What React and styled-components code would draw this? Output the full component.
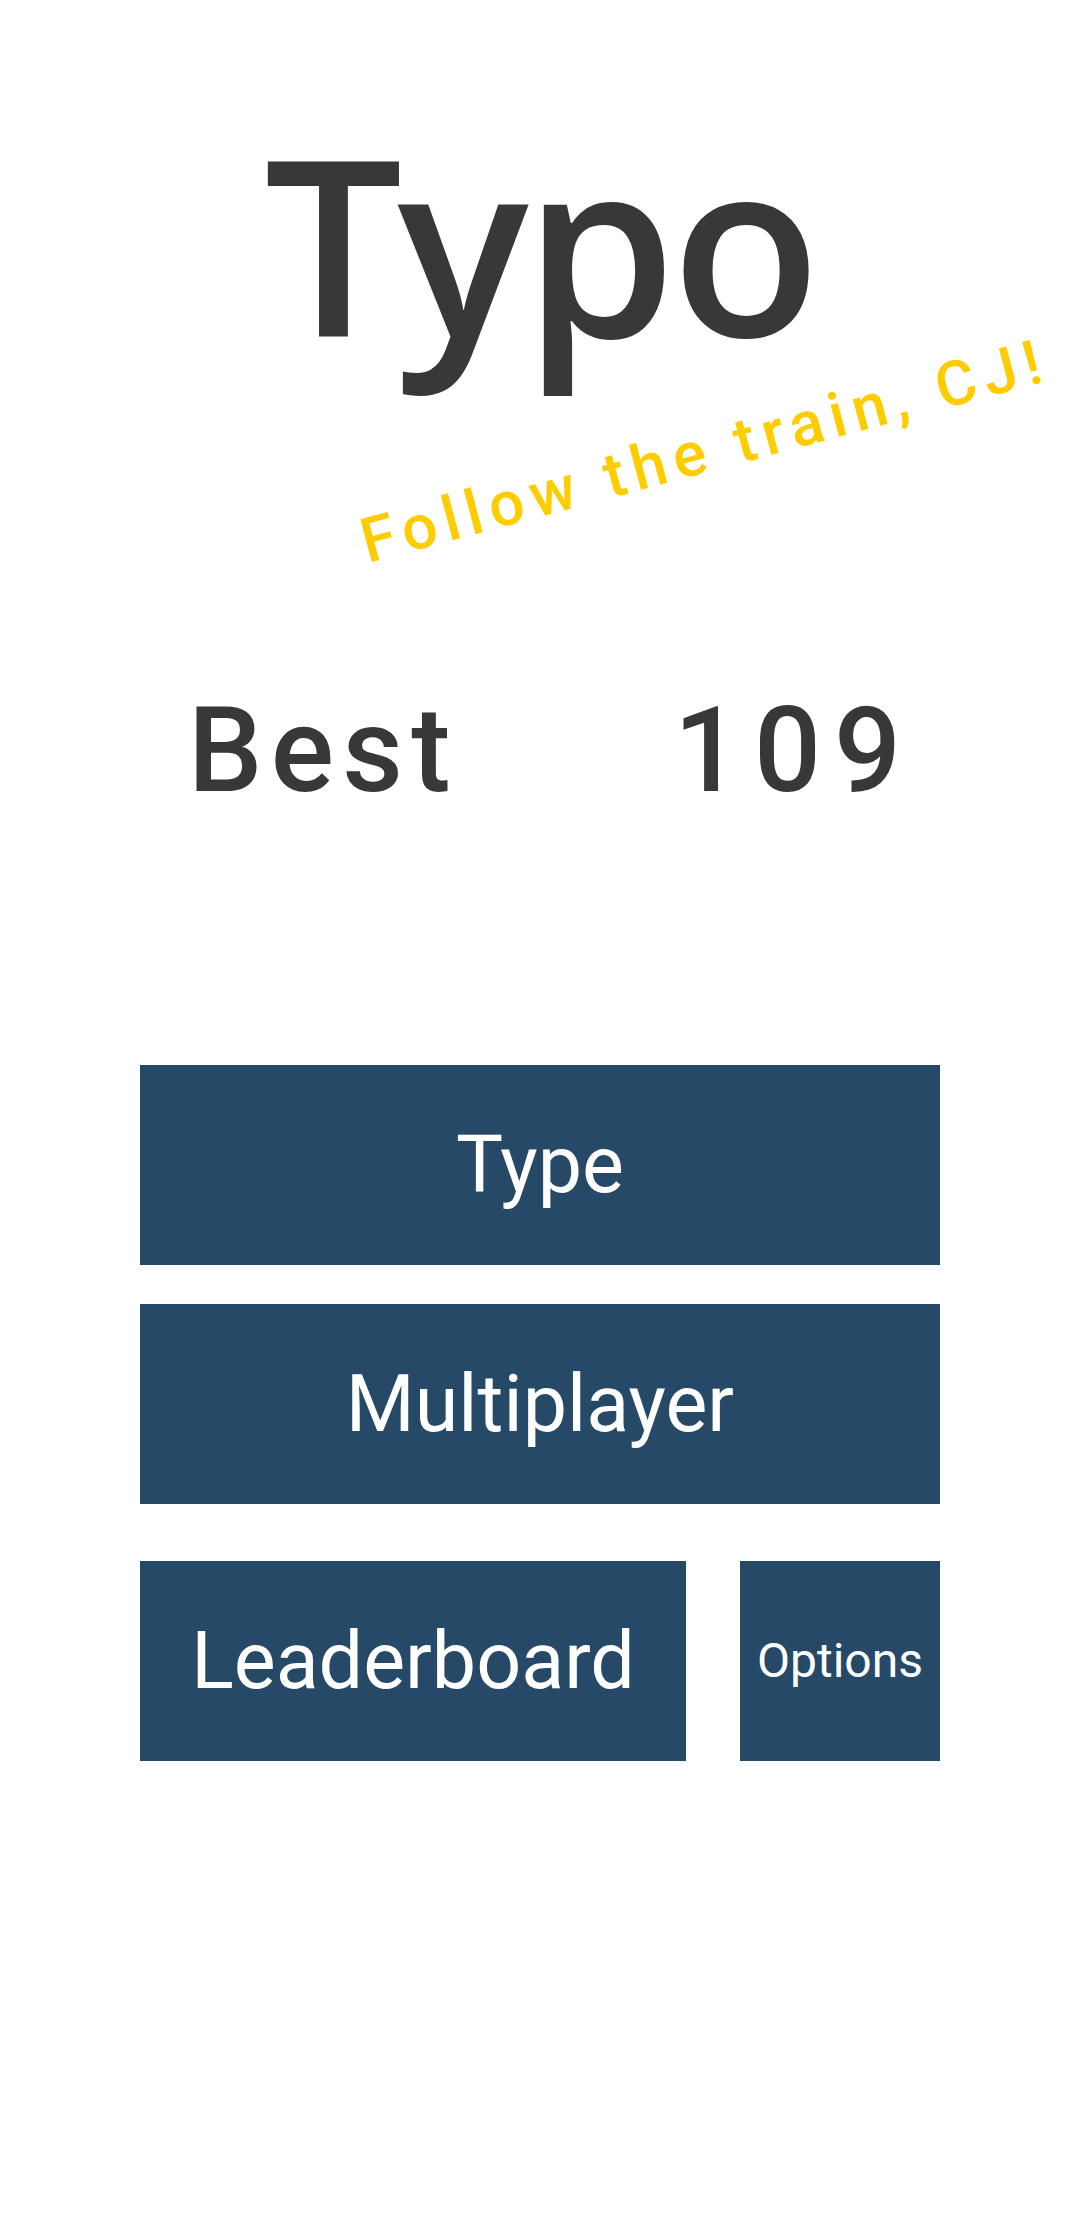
import React from 'react';
import styled, { createGlobalStyle } from 'styled-components';

const GlobalStyle = createGlobalStyle`
  html, body {
    margin: 0;
    padding: 0;
    background: #ffffff;
  }
  * {
    box-sizing: border-box;
  }
`;

const Screen = styled.div`
  width: 1080px;
  min-height: 2220px;
  background: #ffffff;
  display: flex;
  flex-direction: column;
  padding-top: 120px;
  overflow: hidden;
`;

const Title = styled.h1`
  margin: 0;
  font-family: 'Open Sans', 'Noto Sans', sans-serif;
  font-weight: 600;
  font-size: 245px;
  line-height: 1;
  letter-spacing: -5px;
  color: #383838;
  text-align: center;
`;

const TaglineRow = styled.div`
  display: flex;
  justify-content: center;
  padding-left: 330px;
  margin-top: 55px;
`;

const Tagline = styled.span`
  display: block;
  font-family: Roboto, 'Liberation Sans', sans-serif;
  font-weight: 500;
  font-size: 62px;
  line-height: 1;
  letter-spacing: 0.125em;
  color: #ffcc00;
  white-space: nowrap;
  transform: rotate(-15deg);
`;

const BestRow = styled.div`
  display: flex;
  justify-content: space-between;
  padding: 0 166px 0 188px;
  margin-top: 210px;
`;

const BestText = styled.span`
  font-family: Roboto, 'Liberation Sans', sans-serif;
  font-weight: 500;
  font-size: 118px;
  line-height: 1;
  letter-spacing: ${({ $spacing }) => $spacing || '0.07em'};
  color: #383838;
`;

const Menu = styled.div`
  display: flex;
  flex-direction: column;
  padding: 0 140px;
  margin-top: 255px;
`;

const MenuRow = styled.div`
  display: flex;
  gap: 54px;
  margin-top: ${({ $gap }) => $gap || 0}px;
`;

const MenuButton = styled.button`
  flex: ${({ $narrow }) => ($narrow ? '0 0 200px' : '1 1 auto')};
  height: 200px;
  border: none;
  border-radius: 0;
  padding: 0;
  margin: 0;
  background: #264968;
  color: #ffffff;
  font-family: Roboto, 'Liberation Sans', sans-serif;
  font-size: ${({ $small }) => ($small ? '48px' : '79px')};
  font-weight: 400;
  line-height: 1;
  display: flex;
  align-items: center;
  justify-content: center;
  cursor: pointer;
`;

export default function App() {
  return (
    <>
      <GlobalStyle />
      <Screen>
        <Title>Typo</Title>
        <TaglineRow>
          <Tagline>Follow the train, CJ!</Tagline>
        </TaglineRow>
        <BestRow>
          <BestText>Best</BestText>
          <BestText $spacing="0.11em">109</BestText>
        </BestRow>
        <Menu>
          <MenuRow>
            <MenuButton>Type</MenuButton>
          </MenuRow>
          <MenuRow $gap={39}>
            <MenuButton>Multiplayer</MenuButton>
          </MenuRow>
          <MenuRow $gap={57}>
            <MenuButton>Leaderboard</MenuButton>
            <MenuButton $narrow $small>
              Options
            </MenuButton>
          </MenuRow>
        </Menu>
      </Screen>
    </>
  );
}
